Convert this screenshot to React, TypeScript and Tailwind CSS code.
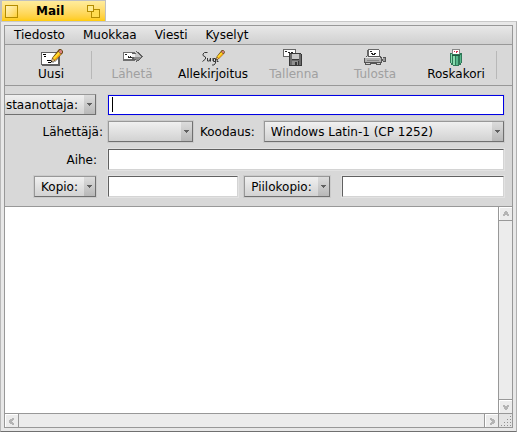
import React, { useState } from "react";

const face = 'font-["DejaVu_Sans",sans-serif]';

function Pencil({ x, y, size }: { x: number; y: number; size: number }) {
  return (
    <g transform={`translate(${x} ${y}) scale(${size})`} shapeRendering="auto">
      <path d="M9 0h2l2 2v2l-8 8-4 1 1-4z" fill="#6e4a14" />
      <path d="M2.500 9.500l2 2-2.500.7z" fill="#f0d0a0" />
      <path d="M3 9l5-6 3 2.500-6 6z" fill="#f8a810" />
      <path d="M3 9l5.500-6 1.300 1.200-5.600 6z" fill="#ffe030" />
      <path d="M8.600 2.400l1.400-1.400h1l1 1v1.400l-1.200 1.400z" fill="#d88080" />
      <path d="M1 11.500l1.500 1-1.500.5z" fill="#000" />
    </g>
  );
}

function NewIcon() {
  return (
    <>
      <path d="M3 4h18v13h-18z" fill="#606060" />
      <path d="M2 3h18v13h-18z" fill="#606060" />
      <path d="M3 4h16v11h-16z" fill="#fff" />
      <path d="M4 5h3v1h-3zM5 7h2v1h-2zM8 11h4v1h-4zM9 13h5v1h-5z" fill="#000" />
      <path d="M14 12h3v1h-2v1h-3v-1h2zM17 8h2v3h-1v1h-1z" fill="#bbb" />
      <Pencil x={11} y={0} size={1} />
    </>
  );
}

function SendIcon() {
  return (
    <>
      <path d="M3 3h12v9h-12z" fill="#707070" />
      <path d="M4 4h11v6h-11z" fill="#fff" />
      <path d="M5 5h2v1h-2zM8 7h1v1h1v-1h1v1h1v1h-4z" fill="#222" />
      <path d="M12 4h4v-2h1v1h2v1h1v1h1v1h1v1h1v1h-1v1h-1v1h-1v1h-1v1h-2v1h-1v-2h-4z" fill="#606060" />
      <path d="M12 5h4v-2h1v1h1v1h1v1h1v1h1v1h-9z" fill="#c8c8c8" />
      <path d="M14 8h7v1h-1v1h-1v1h-2v1h-1v-2h-2z" fill="#8c8c8c" />
      <path d="M12 5h3v3h-3z" fill="#f0f0f0" />
    </>
  );
}

function SignatureIcon() {
  return (
    <>
      <path
        d="M6.500 3.500H3.500L2 5v1.500l2.500 1.500v2l-3 2.500M6.500 9v3h2l1-3M12 12V9M12.500 9.500h2v3h-2zM14.500 10v4l-1.500 2h-2M9.500 9v3.500M16.500 9.500l-.5 3h1.500"
        fill="none"
        stroke="#383838"
        strokeWidth="1"
        shapeRendering="auto"
      />
      <Pencil x={14} y={1} size={0.75} />
    </>
  );
}

function SaveIcon() {
  return (
    <>
      <path d="M1 0h13v8h-13z" fill="#666" />
      <path d="M2 1h11v6h-11z" fill="#fff" />
      <path d="M3 2h2v1h-2zM6 3h2v1h1v-1h2v1h-1v1h-3z" fill="#222" />
      <path d="M7 4h12v1h1v12h-13z" fill="#383838" />
      <path d="M8 5h2v6h7v-6h2v11h-2v-4h-7v4h-2z" fill="#6c6c6c" />
      <path d="M10 5h7v5h-7z" fill="#c8c8c8" />
      <path d="M10 12h6v4h-6z" fill="#909090" />
      <path d="M13 13h2v3h-2z" fill="#383838" />
    </>
  );
}

function PrintIcon() {
  return (
    <>
      <path d="M5 0h11v1h1v8h-13v-8z" fill="#666" />
      <path d="M6 1h10v7h-10z" fill="#fff" />
      <path d="M7 2h2v1h-2zM8 4h2v1h1v-1h2v1h-1v1h-3z" fill="#222" />
      <path d="M3 7h15v1h1v2h1v-2h3v5h-3v-1h-1v2h-1v2h-5v-1h-5v1h-6v-2h-1v-5h2z" fill="#555" />
      <path d="M3 8h14v1h-14z" fill="#e8e8e8" />
      <path d="M2 9h16v4h-16z" fill="#b0b0b0" />
      <path d="M4 11h12v1h-12z" fill="#888" />
      <path d="M4 7h1v1h-1zM3 14h4v1h-4zM14 14h3v1h-3z" fill="#ccc" />
      <path d="M20 9h2v3h-2z" fill="#999" />
    </>
  );
}

function TrashIcon() {
  return (
    <>
      <path d="M8 0h8v6h-8z" fill="#888" />
      <path d="M9 1h6v5h-6z" fill="#fff" />
      <path d="M10 2h1v1h-1zM12 2h2v1h-1v1h-1z" fill="#d03050" />
      <path d="M6 4h2v1h8v-1h2v10h-1v2h-2v1h-6v-1h-2v-2h-1z" fill="#2f7858" />
      <path d="M7 5h1v9h-1zM9 7h2v9h-2z" fill="#88dcb0" />
      <path d="M12 7h2v9h-2zM16 6h1v8h-1z" fill="#58b88c" />
      <path d="M8 6h8v1h-8z" fill="#205c40" />
    </>
  );
}

const tools = [
  { label: "Uusi", icon: <NewIcon />, disabled: false, divider: true },
  { label: "Lähetä", icon: <SendIcon />, disabled: true, divider: false },
  { label: "Allekirjoitus", icon: <SignatureIcon />, disabled: false, divider: false },
  { label: "Tallenna", icon: <SaveIcon />, disabled: true, divider: false },
  { label: "Tulosta", icon: <PrintIcon />, disabled: true, divider: false },
  { label: "Roskakori", icon: <TrashIcon />, disabled: false, divider: true },
];

const raised =
  "border border-[#989898] border-r-[#707070] border-b-[#707070] outline outline-1 outline-[#cbcbcb] bg-linear-to-b from-[#f0f0f0] to-[#d2d2d2]";
const sunken =
  "h-[21px] w-full min-w-0 appearance-none border border-t-[#606060] border-l-[#606060] border-r-[#d4d4d4] border-b-[#d4d4d4] bg-white px-1 text-xs outline outline-1 outline-[#e2e2e2]";

function DropArrow() {
  return (
    <span className="pointer-events-none flex w-[11px] shrink-0 items-center justify-center self-stretch bg-linear-to-b from-[#dcdcdc] to-[#b8b8b8]">
      <svg width="5" height="3" viewBox="0 0 5 3" shapeRendering="crispEdges" aria-hidden="true">
        <path d="M0 0h5v1h-1v1h-1v1h-1v-1h-1v-1h-1z" fill="#606060" />
      </svg>
    </span>
  );
}

function MenuButton({ children }: { children: React.ReactNode }) {
  return (
    <button type="button" className={`flex h-[21px] shrink-0 items-center text-xs ${raised}`}>
      <span className="px-[6px] whitespace-nowrap">{children}</span>
      <DropArrow />
    </button>
  );
}

function Picker({ id, options, className }: { id: string; options: string[]; className: string }) {
  return (
    <div className={`flex h-[21px] items-center ${raised} ${className}`}>
      <select id={id} className="h-full min-w-0 flex-1 appearance-none bg-transparent pl-[6px] text-xs outline-none">
        {options.map((o) => (
          <option key={o}>{o}</option>
        ))}
      </select>
      <DropArrow />
    </div>
  );
}

const chevrons = {
  up: "M3 0h2v1h1v2h1v2h-2v-1h-2v1h-2v-2h1v-2h1z",
  down: "M1 1h2v1h2v-1h2v2h-1v2h-1v1h-2v-1h-1v-2h-1z",
  left: "M4 0h2v2h-1v1h-1v1h1v1h1v2h-2v-1h-2v-1h-1v-3h1v-1h2z",
  right: "M2 0h2v1h2v1h1v3h-1v1h-2v1h-2v-2h1v-1h1v-1h-1v-1h-1z",
};

function ScrollButton({ dir, label }: { dir: keyof typeof chevrons; label: string }) {
  return (
    <button
      type="button"
      aria-label={label}
      className="flex h-[13px] w-[13px] shrink-0 items-center justify-center border-t border-l border-white bg-[#ececec]"
    >
      <svg width="8" height="7" viewBox="0 0 8 7" shapeRendering="crispEdges" aria-hidden="true">
        <path d={chevrons[dir]} fill="#b4b4b4" />
      </svg>
    </button>
  );
}

export default function App() {
  const [to, setTo] = useState("");
  return (
    <div className={`flex h-screen min-h-96 w-full flex-col bg-white text-xs text-black ${face}`}>
      <header className="flex h-[21px] w-[106px] shrink-0 items-center border-t border-r border-l-2 border-[#c0c0c0] bg-linear-to-b from-[#ffec9c] to-[#ffcb00] pr-[5px] pl-[3px]">
        <button type="button" aria-label="Sulje" className="h-[13px] w-[13px] border border-[#b48c00] bg-linear-to-br from-[#fff4c0] to-[#ffd028]" />
        <h1 className="ml-[18px] flex-1 text-xs font-bold">Mail</h1>
        <button type="button" aria-label="Zoomaa" className="h-[13px] w-[13px]">
          <svg width="13" height="13" viewBox="0 0 13 13" shapeRendering="crispEdges" aria-hidden="true">
            <path d="M4.500 4.500h8v8h-8z" fill="#ffdc50" stroke="#b48c00" />
            <path d="M.5 .5h6v6h-6z" fill="#ffeb90" stroke="#b48c00" />
          </svg>
        </button>
      </header>

      <div className="flex min-h-0 flex-1 flex-col border border-t-[#c8c8c8] border-r-[#b0b0b0] border-b-[#707070] border-l-[#b8b8b8] bg-[#e8e8e8] p-[3px]">
        <main className="flex min-h-0 flex-1 flex-col border border-[#989898] bg-[#d8d8d8]">
          <nav className="flex h-[19px] shrink-0 items-center border-b border-[#989898] bg-linear-to-b from-[#e8e8e8] to-[#d0d0d0]">
            {["Tiedosto", "Muokkaa", "Viesti", "Kyselyt"].map((m) => (
              <button key={m} type="button" className="px-[9px] text-xs">
                {m}
              </button>
            ))}
          </nav>

          <div className="flex h-[41px] shrink-0 gap-px border-b border-[#989898] pl-[6px]">
            {tools.map((t) => (
              <div key={t.label} className="flex items-center">
                <button
                  type="button"
                  disabled={t.disabled}
                  className="flex h-full w-20 flex-col items-center pt-1 text-xs disabled:text-[#a0a0a0]"
                >
                  <svg width="24" height="17" viewBox="0 0 24 17" shapeRendering="crispEdges" aria-hidden="true">
                    {t.icon}
                  </svg>
                  <span className="leading-4">{t.label}</span>
                </button>
                {t.divider && <span className="-mr-px h-7 w-px bg-[#b8b8b8]" />}
              </div>
            ))}
          </div>

          <form
            className="flex shrink-0 flex-col gap-[7px] border-b border-[#989898] pt-2 pr-2 pb-[9px]"
            onSubmit={(e) => e.preventDefault()}
          >
            <div className="grid grid-cols-[103px_1fr] items-center gap-y-[6px]">
              <div className="flex justify-end overflow-hidden pr-3">
                <MenuButton>Vastaanottaja:</MenuButton>
              </div>
              <div className="relative flex h-[21px] items-center">
                <input
                  aria-label="Vastaanottaja"
                  value={to}
                  onChange={(e) => setTo(e.target.value)}
                  className="h-5 w-full min-w-0 border border-[#0000e5] bg-white px-1 text-xs outline outline-1 outline-[#d0d0d0]"
                />
                {to === "" && <span className="pointer-events-none absolute top-[3px] left-1 h-[15px] w-px bg-black" />}
              </div>
              <label htmlFor="from" className="pr-[5px] text-right">Lähettäjä:</label>
              <div className="flex items-center">
                <Picker id="from" options={[""]} className="w-[85px]" />
                <label htmlFor="encoding" className="pr-[9px] pl-[7px]">Koodaus:</label>
                <Picker id="encoding" options={["Windows Latin-1 (CP 1252)"]} className="min-w-0 flex-1" />
              </div>
            </div>
            <div className="grid grid-cols-[103px_1fr] items-center gap-y-[6px]">
              <label htmlFor="subject" className="pr-[11px] text-right">Aihe:</label>
              <input id="subject" className={sunken} />
              <div className="flex justify-end pr-3">
                <MenuButton>Kopio:</MenuButton>
              </div>
              <div className="grid grid-cols-[130fr_auto_162fr] items-center">
                <input aria-label="Kopio" className={sunken} />
                <div className="pr-3 pl-[6px]">
                  <MenuButton>Piilokopio:</MenuButton>
                </div>
                <input aria-label="Piilokopio" className={sunken} />
              </div>
            </div>
          </form>

          <div className="flex min-h-0 flex-1">
            <textarea aria-label="Viesti" className="min-w-0 flex-1 resize-none bg-white p-1 text-xs outline-none" />
            <div className="flex w-[14px] shrink-0 flex-col border-l border-[#989898] bg-[#ececec]">
              <ScrollButton dir="up" label="Vieritä ylös" />
              <div className="flex-1 border-y border-[#989898]" />
              <ScrollButton dir="down" label="Vieritä alas" />
            </div>
          </div>
          <div className="flex h-[14px] shrink-0 border-t border-[#989898] bg-[#ececec]">
            <ScrollButton dir="left" label="Vieritä vasemmalle" />
            <div className="flex-1 border-x border-[#989898]" />
            <ScrollButton dir="right" label="Vieritä oikealle" />
            <div className="flex w-[14px] items-end justify-end border-l border-[#989898] bg-[#e4e4e4]">
              <svg width="11" height="11" viewBox="0 0 11 11" shapeRendering="crispEdges" aria-hidden="true">
                <path d="M9 0h1v1h-1zM6 3h1v1h-1zM9 3h1v1h-1zM3 6h1v1h-1zM6 6h1v1h-1zM9 6h1v1h-1zM0 9h1v1h-1zM3 9h1v1h-1zM6 9h1v1h-1zM9 9h1v1h-1z" fill="#909090" />
              </svg>
            </div>
          </div>
        </main>
      </div>
    </div>
  );
}
